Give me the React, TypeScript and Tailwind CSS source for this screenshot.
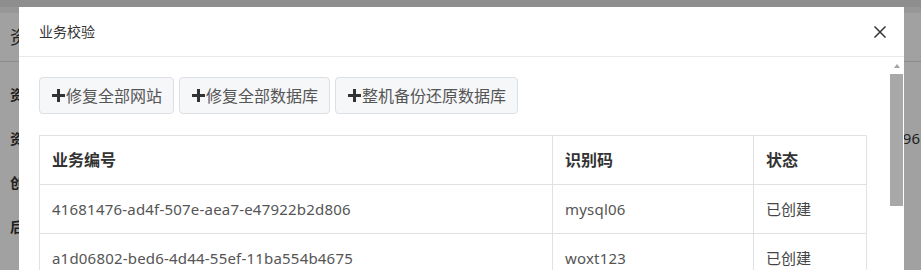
import React from "react";

const font = { fontFamily: '"Noto Sans", "Noto Sans CJK SC", sans-serif' };

function Plus() {
  return (
    <svg width="13" height="13" viewBox="0 0 13 13" className="shrink-0">
      <rect x="5" y="0" width="3" height="13" fill="#333" />
      <rect x="0" y="5" width="13" height="3" fill="#333" />
    </svg>
  );
}

function Btn({ label }: { label: string }) {
  return (
    <button className="h-[37px] flex items-center gap-[1px] pl-[12px] pr-[11px] border border-[#dcdfe3] rounded-[4px] bg-[#f6f7f9] text-[16px] text-[#555] leading-none">
      <Plus />
      <span>{label}</span>
    </button>
  );
}

const rows = [
  ["41681476-ad4f-507e-aea7-e47922b2d806", "mysql06", "已创建"],
  ["a1d06802-bed6-4d44-55ef-11ba554b4675", "woxt123", "已创建"],
];

export default function App() {
  return (
    <div className="relative w-[921px] h-[270px] overflow-hidden bg-[#a1a1a1]" style={font}>
      {/* dimmed background page */}
      <div className="h-[7px] bg-[#8e8e8e]" />
      <div className="h-[6px] bg-[#979797]" />
      <div className="h-[49px] flex items-center px-[10px] border-b border-[#8b8b8b]">
        <span className="text-[18px] text-[#222]">资</span>
      </div>
      <div className="pt-[10px] px-[10px] flex flex-col text-[14px] font-bold text-[#1e1e1e]">
        <div className="h-[44px] flex items-center">资</div>
        <div className="h-[44px] flex items-center justify-between">
          <span>资</span>
          <span className="font-normal text-[15px] -mr-[9px]">l96</span>
        </div>
        <div className="h-[44px] flex items-center">创</div>
        <div className="h-[44px] flex items-center">后</div>
      </div>

      {/* modal */}
      <div className="absolute left-[19px] top-[7px] w-[885px] h-[320px] bg-white flex flex-col">
        <div className="h-[50px] shrink-0 flex items-center justify-between pl-[20px] pr-[18px] border-b border-[#e9e9e9]">
          <span className="text-[14px] text-[#333]">业务校验</span>
          <svg width="12" height="12" viewBox="0 0 12 12">
            <path d="M0.5 0.5 L11.5 11.5 M11.5 0.5 L0.5 11.5" stroke="#333" strokeWidth="1.5" />
          </svg>
        </div>
        <div className="flex flex-1">
          <div className="flex-1 pl-[20px] pr-[23px] pt-[20px] flex flex-col gap-[21px]">
            <div className="flex gap-[5px]">
              <Btn label="修复全部网站" />
              <Btn label="修复全部数据库" />
              <Btn label="整机备份还原数据库" />
            </div>
            <table className="w-[827px] table-fixed border-collapse">
              <colgroup>
                <col className="w-[513px]" />
                <col className="w-[201px]" />
                <col className="w-[113px]" />
              </colgroup>
              <thead>
                <tr className="h-[49px]">
                  <th className="border border-[#dfe1e4] text-left px-[12px] text-[16px] font-bold text-[#333]">业务编号</th>
                  <th className="border border-[#dfe1e4] text-left px-[12px] text-[16px] font-bold text-[#333]">识别码</th>
                  <th className="border border-[#dfe1e4] text-left px-[12px] text-[16px] font-bold text-[#333]">状态</th>
                </tr>
              </thead>
              <tbody>
                {rows.map((r) => (
                  <tr key={r[0]} className="h-[49px]">
                    <td className="border border-[#dfe1e4] px-[12px] text-[15px] tracking-[0.2px] text-[#555]">{r[0]}</td>
                    <td className="border border-[#dfe1e4] px-[12px] text-[15px] tracking-[0.2px] text-[#555]">{r[1]}</td>
                    <td className="border border-[#dfe1e4] px-[12px] text-[15px] text-[#444]">{r[2]}</td>
                  </tr>
                ))}
              </tbody>
            </table>
          </div>
          {/* scrollbar */}
          <div className="w-[15px] shrink-0 flex flex-col">
            <div className="h-[17px] w-[13px] flex justify-center pt-[7px]">
              <div className="w-0 h-0 border-l-[3.5px] border-r-[3.5px] border-b-[4px] border-l-transparent border-r-transparent border-b-[#a3a3a3]" />
            </div>
            <div className="w-[13px] h-[132px] bg-[#a8a8a8]" />
          </div>
        </div>
      </div>
    </div>
  );
}
